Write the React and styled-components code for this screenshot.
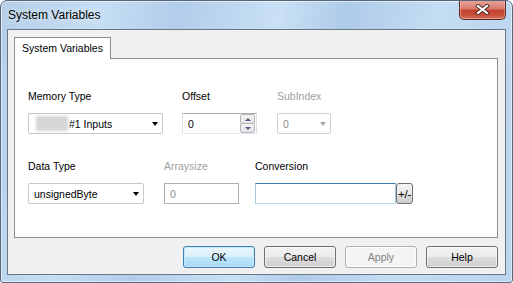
import React from 'react';
import styled, { createGlobalStyle } from 'styled-components';

const GlobalStyle = createGlobalStyle`
  html, body {
    margin: 0;
    padding: 0;
    background: #fff;
  }
  body {
    font-family: "Liberation Sans", Arial, sans-serif;
  }
`;

const Window = styled.div`
  box-sizing: border-box;
  width: 513px;
  height: 283px;
  display: flex;
  flex-direction: column;
  padding: 0 6px 7px 6px;
  border: 1px solid #56677b;
  border-radius: 7px 7px 3px 3px;
  background: linear-gradient(100deg, #b4cfe9 0%, #c6def4 18%, #b2cdea 32%, #c9e0f5 50%, #aecbe8 62%, #c4dcf3 78%, #b9d4ee 100%);
  box-shadow: inset 0 0 0 1px rgba(255, 255, 255, 0.55);
  overflow: hidden;
`;

const TitleBar = styled.div`
  height: 28px;
  display: flex;
  align-items: center;
  justify-content: space-between;
  flex-shrink: 0;
`;

const Title = styled.div`
  padding-left: 1px;
  font-size: 12px;
  color: #000;
  text-shadow: 0 0 6px rgba(255, 255, 255, 0.9);
`;

const CloseButton = styled.div`
  align-self: flex-start;
  margin-top: -1px;
  width: 47px;
  height: 20px;
  box-sizing: border-box;
  border: 1px solid #5b2a24;
  border-top: none;
  border-radius: 0 0 5px 5px;
  background: linear-gradient(to bottom, #e8a79d 0%, #d87a6c 45%, #c2402e 55%, #c8503a 80%, #d9765e 100%);
  box-shadow: inset 0 0 0 1px rgba(255, 200, 190, 0.45);
  display: flex;
  align-items: center;
  justify-content: center;
`;

const Client = styled.div`
  flex: 1;
  display: flex;
  flex-direction: column;
  box-sizing: border-box;
  border: 1px solid #6c7785;
  background: #f0f0f0;
  padding: 7px 7px 6px 6px;
`;

const TabStrip = styled.div`
  display: flex;
  position: relative;
  z-index: 1;
  margin-bottom: -1px;
`;

const Tab = styled.div`
  box-sizing: border-box;
  width: 97px;
  height: 22px;
  border: 1px solid #898c95;
  border-bottom: none;
  background: #fff;
  padding: 0 0 2px 7px;
  display: flex;
  align-items: center;
  font-size: 10.5px;
  color: #000;
`;

const Panel = styled.div`
  flex: 1;
  border: 1px solid #898c95;
  background: #fff;
  padding: 31px 0 0 13px;
  display: flex;
  flex-direction: column;
  gap: 26px;
`;

const Row = styled.div`
  display: flex;
  align-items: flex-start;
`;

const Field = styled.div`
  display: flex;
  flex-direction: column;
  gap: 10px;
  width: ${(p) => p.$width}px;
  margin-left: ${(p) => p.$ml || 0}px;
`;

const Label = styled.div`
  font-size: 10.5px;
  line-height: 13px;
  height: 13px;
  color: ${(p) => (p.$disabled ? '#a0a0a0' : '#000')};
  white-space: nowrap;
`;

const Combo = styled.div`
  box-sizing: border-box;
  height: 21px;
  width: ${(p) => p.$width}px;
  border: 1px solid ${(p) => (p.$disabled ? '#cfcfcf' : '#c8c8c8')};
  border-radius: 2px;
  background: #fff;
  display: flex;
  align-items: center;
  padding: 0 4px 0 5px;
  font-size: 10.5px;
  color: ${(p) => (p.$disabled ? '#8d8d8d' : '#000')};
`;

const ComboText = styled.span`
  flex: 1;
  display: flex;
  align-items: center;
  white-space: nowrap;
`;

const Redacted = styled.span`
  display: inline-block;
  width: 32px;
  height: 15px;
  margin: 0 1px 0 2px;
  background: #d6d6d6;
  filter: blur(1.5px);
`;

const Arrow = styled.span`
  width: 0;
  height: 0;
  border-left: 3.5px solid transparent;
  border-right: 3.5px solid transparent;
  border-top: 4px solid ${(p) => (p.$disabled ? '#a8a8a8' : '#000')};
`;

const TextBox = styled.div`
  box-sizing: border-box;
  height: 21px;
  width: ${(p) => p.$width}px;
  border: 1px solid;
  border-color: ${(p) =>
    p.$focused
      ? '#3d7bad #a4c9e3 #b7d9ed #a4c9e3'
      : p.$disabled
        ? '#adb2b5'
        : '#abadb3 #dbdfe6 #e3e9ef #e2e3ea'};
  background: #fff;
  display: flex;
  align-items: center;
  padding-left: 5px;
  font-size: 10.5px;
  color: ${(p) => (p.$disabled ? '#8d8d8d' : '#000')};
`;

const SpinBox = styled(TextBox)`
  padding-right: 1px;
  justify-content: space-between;
`;

const SpinButtons = styled.div`
  display: flex;
  flex-direction: column;
  height: 19px;
`;

const SpinButton = styled.div`
  box-sizing: border-box;
  width: 15px;
  height: 10px;
  margin-top: ${(p) => (p.$down ? '-1px' : '0')};
  border: 1px solid #b4b4b4;
  border-radius: 2px;
  background: linear-gradient(to bottom, #f4f4f4, #e3e3e3);
  display: flex;
  align-items: center;
  justify-content: center;
`;

const SpinArrow = styled.span`
  width: 0;
  height: 0;
  border-left: 3px solid transparent;
  border-right: 3px solid transparent;
  ${(p) => (p.$down ? 'border-top: 3px solid #4b5f8a;' : 'border-bottom: 3px solid #4b5f8a;')}
`;

const InputGroup = styled.div`
  display: flex;
  align-items: center;
`;

const SmallButton = styled.div`
  box-sizing: border-box;
  width: 17px;
  height: 21px;
  border: 1px solid #707070;
  border-radius: 3px;
  background: linear-gradient(to bottom, #f2f2f2 0%, #ebebeb 50%, #dddddd 51%, #cfcfcf 100%);
  display: flex;
  align-items: center;
  justify-content: center;
  font-size: 11.5px;
  color: #000;
  letter-spacing: -0.3px;
`;

const ButtonRow = styled.div`
  display: flex;
  justify-content: flex-end;
  gap: 9px;
  margin-top: 8px;
`;

const Button = styled.div`
  box-sizing: border-box;
  width: 72px;
  height: 22px;
  border: 1px solid ${(p) => (p.$default ? '#3c7fb1' : p.$disabled ? '#adb2b5' : '#707070')};
  border-radius: 3px;
  background: ${(p) =>
    p.$disabled
      ? '#f4f4f4'
      : p.$default
        ? 'linear-gradient(to bottom, #eaf6fd 0%, #d9f0fc 50%, #bee6fd 51%, #a7d9f5 100%)'
        : 'linear-gradient(to bottom, #f2f2f2 0%, #ebebeb 50%, #dddddd 51%, #cfcfcf 100%)'};
  box-shadow: ${(p) => (p.$default ? 'inset 0 0 0 1px #c8e9fb' : 'inset 0 0 0 1px rgba(255,255,255,0.6)')};
  display: flex;
  align-items: center;
  justify-content: center;
  font-size: 10.5px;
  color: ${(p) => (p.$disabled ? '#838383' : '#000')};
`;

const CloseIcon = () => (
  <svg width="15" height="11" viewBox="0 0 15 11">
    <path d="M3 2 L12 9 M12 2 L3 9" stroke="#4a2420" strokeWidth="4" strokeLinecap="square" />
    <path d="M3 2 L12 9 M12 2 L3 9" stroke="#fff" strokeWidth="2.2" strokeLinecap="square" />
  </svg>
);

export default function App() {
  return (
    <>
      <GlobalStyle />
      <Window>
        <TitleBar>
          <Title>System Variables</Title>
          <CloseButton>
            <CloseIcon />
          </CloseButton>
        </TitleBar>
        <Client>
          <TabStrip>
            <Tab>System Variables</Tab>
          </TabStrip>
          <Panel>
            <Row>
              <Field $width={135}>
                <Label>Memory Type</Label>
                <Combo $width={135}>
                  <ComboText>
                    <Redacted />#1 Inputs
                  </ComboText>
                  <Arrow />
                </Combo>
              </Field>
              <Field $width={75} $ml={19}>
                <Label>Offset</Label>
                <SpinBox $width={75}>
                  <span>0</span>
                  <SpinButtons>
                    <SpinButton>
                      <SpinArrow />
                    </SpinButton>
                    <SpinButton $down>
                      <SpinArrow $down />
                    </SpinButton>
                  </SpinButtons>
                </SpinBox>
              </Field>
              <Field $width={54} $ml={20}>
                <Label $disabled>SubIndex</Label>
                <Combo $width={54} $disabled>
                  <ComboText>0</ComboText>
                  <Arrow $disabled />
                </Combo>
              </Field>
            </Row>
            <Row>
              <Field $width={116}>
                <Label>Data Type</Label>
                <Combo $width={116}>
                  <ComboText>unsignedByte</ComboText>
                  <Arrow />
                </Combo>
              </Field>
              <Field $width={75} $ml={20}>
                <Label $disabled>Arraysize</Label>
                <TextBox $width={75} $disabled>0</TextBox>
              </Field>
              <Field $width={158} $ml={16}>
                <Label>Conversion</Label>
                <InputGroup>
                  <TextBox $width={141} $focused />
                  <SmallButton>+/-</SmallButton>
                </InputGroup>
              </Field>
            </Row>
          </Panel>
          <ButtonRow>
            <Button $default>OK</Button>
            <Button>Cancel</Button>
            <Button $disabled>Apply</Button>
            <Button>Help</Button>
          </ButtonRow>
        </Client>
      </Window>
    </>
  );
}
